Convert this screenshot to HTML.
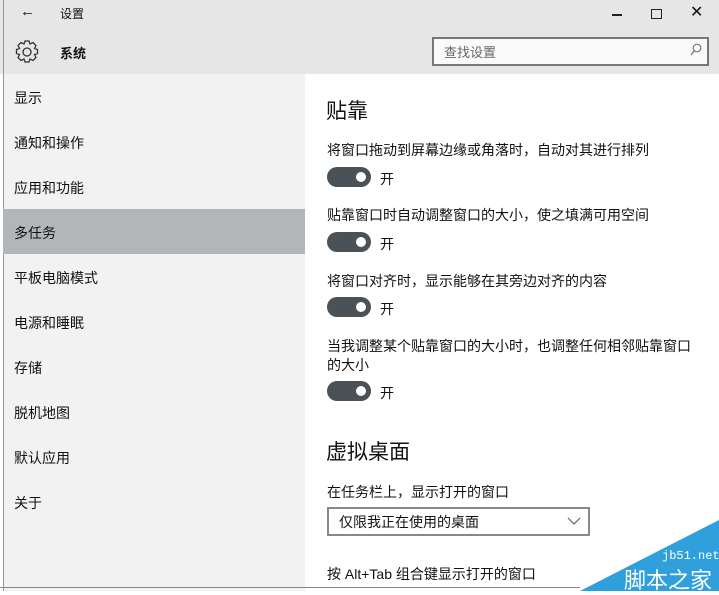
<!DOCTYPE html>
<html><head><meta charset="utf-8"><style>
*{margin:0;padding:0;box-sizing:border-box}
body{width:719px;height:591px;overflow:hidden;background:#fff;font-family:"Liberation Sans","Noto Sans CJK SC",sans-serif;color:#111;position:relative}
.a{position:absolute;white-space:nowrap}
.nav{font-size:14px;left:14px}
.tg{position:absolute;left:327px;width:44px;height:20px;border-radius:10px;background:#4a5258}
.tg::after{content:"";position:absolute;right:5px;top:5px;width:10px;height:10px;border-radius:50%;background:#fff}
.on{font-size:14px;left:380px}
.t{font-size:14px;left:327px}
</style></head><body>
<div class="a" style="left:0;top:0;width:719px;height:74px;background:#e6e6e6"></div>
<div class="a" style="left:3px;top:74px;width:302px;height:517px;background:#f2f2f2"></div>
<div class="a" style="left:3px;top:0;width:1px;height:591px;background:#999"></div>
<div class="a" style="left:3px;top:209px;width:302px;height:45px;background:#b3b6b8"></div>
<div class="a" style="left:20px;top:3px;font-size:15px">←</div>
<div class="a" style="left:60px;top:5px;font-size:12px">设置</div>
<div class="a" style="left:612px;top:14px;width:10px;height:1.5px;background:#222"></div>
<div class="a" style="left:651px;top:9px;width:11px;height:10px;border:1.5px solid #222"></div>
<div class="a" style="left:690px;top:2px;font-size:16px">✕</div>
<svg class="a" style="left:14px;top:39px" width="26" height="26" viewBox="0 0 26 26"><g fill="none" stroke="#333" stroke-width="1.3"><circle cx="13" cy="13" r="4"/><path d="M11 2h4l1 3 3-1.5 3 3-1.5 3 3 1v4l-3 1 1.5 3-3 3-3-1.5-1 3h-4l-1-3-3 1.5-3-3 1.5-3-3-1v-4l3-1-1.5-3 3-3 3 1.5z"/></g></svg>
<div class="a" style="left:60px;top:43px;font-size:13px;font-weight:bold">系统</div>
<div class="a" style="left:432px;top:37px;width:277px;height:29px;border:2px solid #777;background:#fafafa"></div>
<div class="a" style="left:444px;top:42px;font-size:13px;color:#666">查找设置</div>
<svg class="a" style="left:690px;top:43px" width="12" height="14"><circle cx="7" cy="5" r="3.8" fill="none" stroke="#777" stroke-width="1.2"/><path d="M4.3 7.7L1 12" stroke="#777" stroke-width="1.3"/></svg>
<div class="a nav" style="top:88px">显示</div>
<div class="a nav" style="top:133px">通知和操作</div>
<div class="a nav" style="top:178px">应用和功能</div>
<div class="a nav" style="top:223px">多任务</div>
<div class="a nav" style="top:268px">平板电脑模式</div>
<div class="a nav" style="top:313px">电源和睡眠</div>
<div class="a nav" style="top:358px">存储</div>
<div class="a nav" style="top:403px">脱机地图</div>
<div class="a nav" style="top:448px">默认应用</div>
<div class="a nav" style="top:493px">关于</div>
<div class="a" style="left:326px;top:95px;font-size:21px">贴靠</div>
<div class="a t" style="top:140px">将窗口拖动到屏幕边缘或角落时，自动对其进行排列</div>
<div class="tg" style="top:167px"></div><div class="a on" style="top:169px">开</div>
<div class="a t" style="top:205px">贴靠窗口时自动调整窗口的大小，使之填满可用空间</div>
<div class="tg" style="top:232px"></div><div class="a on" style="top:234px">开</div>
<div class="a t" style="top:271px">将窗口对齐时，显示能够在其旁边对齐的内容</div>
<div class="tg" style="top:297px"></div><div class="a on" style="top:299px">开</div>
<div class="a t" style="top:336px">当我调整某个贴靠窗口的大小时，也调整任何相邻贴靠窗口</div>
<div class="a t" style="top:355px">的大小</div>
<div class="tg" style="top:381px"></div><div class="a on" style="top:383px">开</div>
<div class="a" style="left:326px;top:436px;font-size:21px">虚拟桌面</div>
<div class="a t" style="top:482px">在任务栏上，显示打开的窗口</div>
<div class="a" style="left:327px;top:507px;width:263px;height:29px;border:2px solid #888"></div>
<div class="a" style="left:339px;top:512px;font-size:14px">仅限我正在使用的桌面</div>
<svg class="a" style="left:567px;top:516px" width="14" height="10"><path d="M1 2l6 6 6-6" fill="none" stroke="#666" stroke-width="1.2"/></svg>
<div class="a t" style="top:564px">按 Alt+Tab 组合键显示打开的窗口</div>
<div class="a" style="left:0;top:587px;width:580px;height:1px;background:#888"></div>
<svg class="a" style="left:580px;top:520px" width="139" height="71"><polygon points="0,71 139,0 139,71" fill="#2fa0dc"/></svg>
<div class="a" style="left:662px;top:549px;font-size:12px;color:#fff;font-family:'Liberation Mono',monospace">jb51.net</div>
<div class="a" style="left:624px;top:563px;font-size:22px;color:#fff">脚本之家</div>
</body></html>
